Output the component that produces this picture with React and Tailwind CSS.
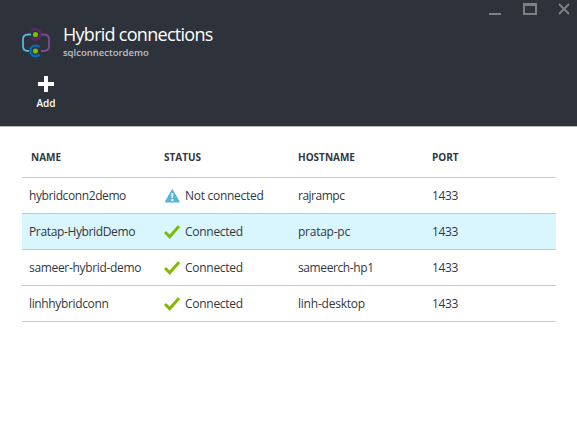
const rows = [
  { name: 'hybridconn2demo', nameClass: 'tracking-[-0.4px]', connected: false, host: 'rajrampc', hostClass: 'tracking-[-0.5px]' },
  { name: 'Pratap-HybridDemo', nameClass: 'tracking-[-0.36px]', connected: true, host: 'pratap-pc', hostClass: 'tracking-[-0.25px]', selected: true },
  { name: 'sameer-hybrid-demo', nameClass: 'tracking-[-0.33px]', connected: true, host: 'sameerch-hp1', hostClass: 'tracking-[-0.4px]' },
  { name: 'linhhybridconn', nameClass: 'tracking-[-0.36px]', connected: true, host: 'linh-desktop', hostClass: 'tracking-[-0.22px]' },
];

function HybridIcon() {
  return (
    <svg width="30" height="32" viewBox="0 0 30 32" fill="none" className="shrink-0">
      <path d="M10 7.5H7Q2 7.5 2 12.5V19Q2 24 7 24H8" stroke="#59b4d9" strokeWidth="1.8" />
      <path d="M20 7.5H23Q28 7.5 28 12.5V19Q28 24 23 24H20" stroke="#804998" strokeWidth="1.8" />
      <path d="M10.4 3.7A5.4 5.4 0 1 1 10.4 11.1" stroke="#68217a" strokeWidth="2.2" />
      <path d="M18.6 20.2A5.4 5.4 0 1 0 18.6 27.6" stroke="#0072c6" strokeWidth="2.2" />
      <circle cx="14.5" cy="7.5" r="2.6" fill="#7fba00" />
      <circle cx="14.5" cy="24" r="2.6" fill="#7fba00" />
    </svg>
  );
}

function CheckIcon() {
  return (
    <svg width="16" height="14" viewBox="0 0 16 14" fill="none" className="shrink-0">
      <path d="M1 7L5.7 11.8L15 1.2" stroke="#7fba00" strokeWidth="3" />
    </svg>
  );
}

function WarningIcon() {
  return (
    <svg width="16" height="14" viewBox="0 0 16 14" className="shrink-0">
      <path d="M8.3 1.2L15 12.8H1.6Z" fill="#59b4d9" stroke="#59b4d9" strokeWidth="1.4" strokeLinejoin="round" />
      <path d="M7.3 4H9.3L9 9H7.6ZM7.3 10H9.3V12H7.3Z" fill="#fff" />
    </svg>
  );
}

function WindowControls() {
  return (
    <svg width="92" height="18" viewBox="0 0 92 18" fill="none" className="absolute right-0 top-0" stroke="#7c7f84">
      <path d="M4 14H16" strokeWidth="2" />
      <path d="M38 4.5H52" strokeWidth="3" />
      <path d="M39 4V14H51V4" strokeWidth="2" />
      <path d="M74 4L84 14M84 4L74 14" strokeWidth="2" />
    </svg>
  );
}

const columns = 'grid grid-cols-[142px_134px_134px_124px] border-b border-[#c8c8c8]';

export default function App() {
  return (
    <main className="h-[433px] w-[577px] overflow-hidden bg-white font-['Open_Sans','Noto_Sans',sans-serif] text-[12px] text-[#32373f]">
      <header className="relative h-[127px] border-b border-[#b4b5b8] bg-[#2e323a] pl-[21px] pt-[22px] text-white">
        <WindowControls />
        <div className="flex">
          <div className="w-[42px] pt-[5px]"><HybridIcon /></div>
          <div>
            <h1 className="whitespace-nowrap text-[18px] leading-6"><span className="tracking-[-0.72px]">Hybrid connections</span></h1>
            <p className="text-[9.5px] font-semibold leading-[14px] text-[#bfc1c4]"><span>sqlconnectordemo</span></p>
          </div>
        </div>
        <button className="ml-[10px] mt-[16px] flex w-[30px] flex-col items-center">
          <svg width="16" height="16" viewBox="0 0 16 16" fill="#fff"><path d="M6 0H10V6H16V10H10V16H6V10H0V6H6Z" /></svg>
          <span className="mt-[3px] text-[10px] font-semibold leading-4">Add</span>
        </button>
      </header>
      <section className="ml-[22px] w-[534px]">
        <div className={`${columns} h-[51px] pt-[22px] text-[10px] font-bold leading-4`}>
          <div className="pl-[9px]"><span>NAME</span></div>
          <div><span>STATUS</span></div>
          <div><span>HOSTNAME</span></div>
          <div><span>PORT</span></div>
        </div>
        {rows.map((row) => (
          <div key={row.name} className={`${columns} h-9 items-center whitespace-nowrap ${row.selected ? 'bg-[#d9f5fe]' : ''}`}>
            <div className="pl-[7px]"><span className={row.nameClass}>{row.name}</span></div>
            <div className="flex items-center gap-[5px]">
              {row.connected ? <CheckIcon /> : <WarningIcon />}
              <span className="tracking-[-0.28px]">{row.connected ? 'Connected' : 'Not connected'}</span>
            </div>
            <div><span className={row.hostClass}>{row.host}</span></div>
            <div><span className="tracking-[-0.4px]">1433</span></div>
          </div>
        ))}
      </section>
    </main>
  );
}
